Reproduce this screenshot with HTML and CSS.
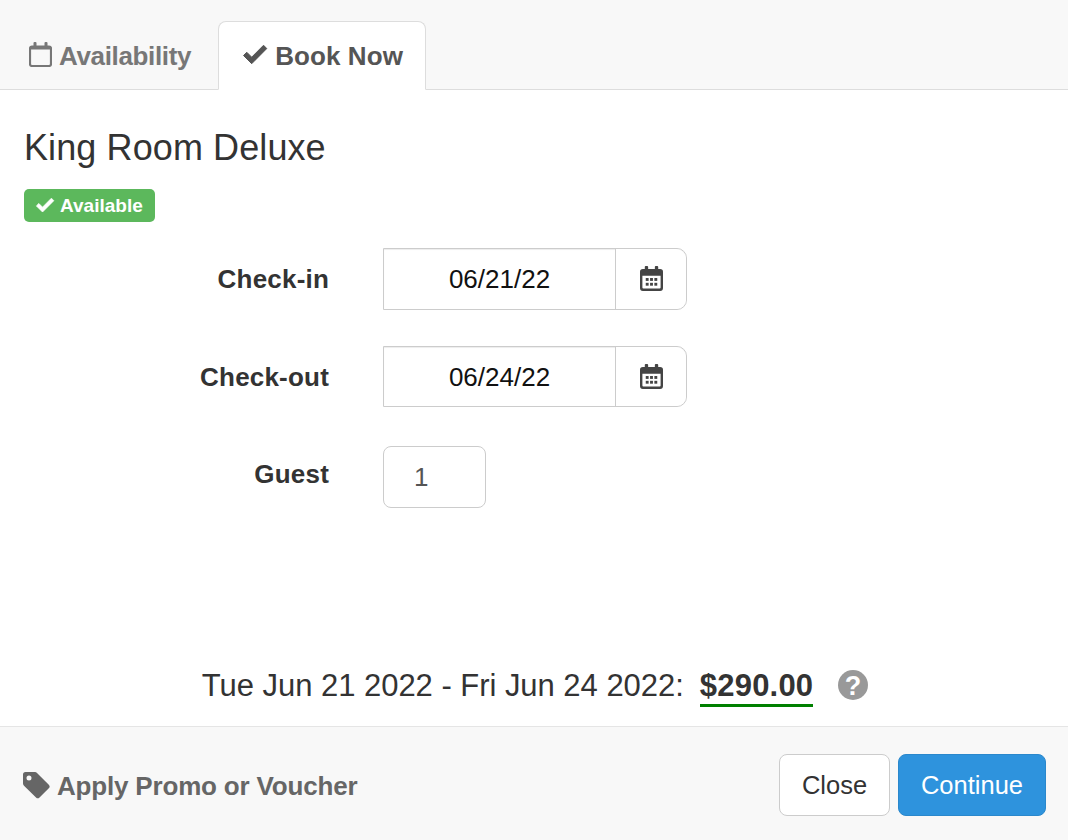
FILE: index.html
```html
<!DOCTYPE html>
<html lang="en">
<head>
<meta charset="utf-8">
<title>Book Now</title>
<link rel="stylesheet" href="styles.css">
</head>
<body>
<div class="modal">
  <div class="tabs">
    <a class="tab">
      <svg class="tab-icon cal-o" viewBox="0 0 23 25"><path d="M3 4.500h17a2 2 0 0 1 2 2v15.500a2 2 0 0 1-2 2H3a2 2 0 0 1-2-2V6.500a2 2 0 0 1 2-2z" fill="none" stroke="currentColor" stroke-width="2.200"/><path d="M1 4.500h21v3H1z" fill="currentColor"/><rect x="4.500" y="0" width="3" height="6" rx="1" fill="currentColor"/><rect x="15.500" y="0" width="3" height="6" rx="1" fill="currentColor"/></svg>
      <span class="tab-label-muted">Availability</span>
    </a>
    <a class="tab active">
      <svg class="tab-icon check" viewBox="0 0 26 20"><path d="M1.500 10.500 9.700 18.700 24.800 3.500 21.500 .3 9.700 12.200 4.800 7.300z" fill="currentColor" stroke="currentColor" stroke-width="1" stroke-linejoin="round"/></svg>
      <span class="tab-label-active">Book Now</span>
    </a>
  </div>
  <div class="content">
    <h1 class="title">King Room Deluxe</h1>
    <span class="badge">
      <svg class="badge-icon" viewBox="0 0 26 20"><path d="M1.500 10.500 9.700 18.700 24.800 3.500 21.500 .3 9.700 12.200 4.800 7.300z" fill="currentColor" stroke="currentColor" stroke-width="1" stroke-linejoin="round"/></svg>
      Available
    </span>
    <div class="form">
      <div class="row">
        <label class="label">Check-in</label>
        <div class="date-group">
          <div class="date-value">06/21/22</div>
          <div class="date-addon">
            <svg class="cal" viewBox="0 0 24 26"><path fill-rule="evenodd" d="M3 3h18a3 3 0 0 1 3 3v17a3 3 0 0 1-3 3H3a3 3 0 0 1-3-3V6a3 3 0 0 1 3-3zM2.500 10v12.500a1 1 0 0 0 1 1h17a1 1 0 0 0 1-1V10z" fill="currentColor"/><rect x="5" y="0" width="3.500" height="6" rx="1" fill="currentColor"/><rect x="15.500" y="0" width="3.500" height="6" rx="1" fill="currentColor"/><g fill="currentColor"><rect x="6" y="12.500" width="3" height="3"/><rect x="10.500" y="12.500" width="3" height="3"/><rect x="15" y="12.500" width="3" height="3"/><rect x="6" y="17.500" width="3" height="3"/><rect x="10.500" y="17.500" width="3" height="3"/><rect x="15" y="17.500" width="3" height="3"/></g></svg>
          </div>
        </div>
      </div>
      <div class="row">
        <label class="label">Check-out</label>
        <div class="date-group">
          <div class="date-value">06/24/22</div>
          <div class="date-addon">
            <svg class="cal" viewBox="0 0 24 26"><path fill-rule="evenodd" d="M3 3h18a3 3 0 0 1 3 3v17a3 3 0 0 1-3 3H3a3 3 0 0 1-3-3V6a3 3 0 0 1 3-3zM2.500 10v12.500a1 1 0 0 0 1 1h17a1 1 0 0 0 1-1V10z" fill="currentColor"/><rect x="5" y="0" width="3.500" height="6" rx="1" fill="currentColor"/><rect x="15.500" y="0" width="3.500" height="6" rx="1" fill="currentColor"/><g fill="currentColor"><rect x="6" y="12.500" width="3" height="3"/><rect x="10.500" y="12.500" width="3" height="3"/><rect x="15" y="12.500" width="3" height="3"/><rect x="6" y="17.500" width="3" height="3"/><rect x="10.500" y="17.500" width="3" height="3"/><rect x="15" y="17.500" width="3" height="3"/></g></svg>
          </div>
        </div>
      </div>
      <div class="row guest-row">
        <label class="label guest-label">Guest</label>
        <div class="guest">1</div>
      </div>
    </div>
    <div class="summary">
      <span class="dates">Tue Jun 21 2022 - Fri Jun 24 2022:</span>
      <span class="price">$290.00</span>
      <svg class="help" viewBox="0 0 30 30"><circle cx="15" cy="15" r="15" fill="currentColor"/><text class="help-mark" x="15" y="24.500" text-anchor="middle">?</text></svg>
    </div>
  </div>
  <div class="footer">
    <a class="promo">
      <svg class="tag" viewBox="0 0 27 27"><path fill-rule="evenodd" d="M2.500 0h9.500a3 3 0 0 1 2 .9l11.800 11.800a2.500 2.500 0 0 1 0 3.500l-9.300 9.300a2.500 2.500 0 0 1-3.500 0L1 13.700a3.500 3.500 0 0 1-1-2.200V2.500A2.500 2.500 0 0 1 2.500 0zM6 3.500a2.500 2.500 0 1 0 0 5 2.500 2.500 0 0 0 0-5z" fill="currentColor"/></svg>
      <span class="promo-label">Apply Promo or Voucher</span>
    </a>
    <div class="actions">
      <button class="btn">Close</button>
      <button class="btn primary">Continue</button>
    </div>
  </div>
</div>
</body>
</html>
```
FILE: styles.css
```css
* { box-sizing: border-box; }
html, body { margin: 0; padding: 0; }
body {
  font-family: "Liberation Sans", Arial, sans-serif;
  color: #333;
  background: #fff;
}
.modal {
  width: 1068px;
  height: 840px;
  display: flex;
  flex-direction: column;
}
.tabs {
  height: 90px;
  flex: none;
  background: #f8f8f8;
  border-bottom: 1px solid #ddd;
  display: flex;
  align-items: flex-end;
  padding-left: 4px;
  gap: 2px;
}
.tab {
  height: 69px;
  margin-bottom: -1px;
  padding: 2px 24px 0;
  display: flex;
  align-items: center;
  gap: 7px;
  font-size: 26px;
  font-weight: 700;
  color: #777;
  border: 1px solid transparent;
  border-radius: 8px 8px 0 0;
  white-space: nowrap;
}
.tab.active {
  padding: 2px 22px 0 23px;
  color: #555;
  background: #fff;
  border-color: #ddd;
  border-bottom-color: #fff;
}
.tab-label-muted { letter-spacing: -0.35px; }
.tab-label-active { letter-spacing: 0.1px; }
.tab-icon { display: block; flex: none; }
.cal-o { width: 23px; height: 25px; margin-top: -4px; }
.check { width: 26px; height: 20px; margin-top: -3px; }
.content {
  flex: 1;
  position: relative;
  padding: 0 24px;
  display: flex;
  flex-direction: column;
  align-items: flex-start;
}
.title {
  margin: 38px 0 0;
  font-size: 36px;
  line-height: 40px;
  letter-spacing: 0.1px;
  font-weight: 400;
  color: #333;
}
.badge {
  margin-top: 21px;
  height: 33px;
  padding: 0 12px 0 11px;
  display: flex;
  align-items: center;
  gap: 5px;
  background: #5cb85c;
  color: #fff;
  font-size: 19px;
  font-weight: 700;
  border-radius: 5px;
}
.badge-icon { width: 20px; height: 15px; display: block; }
.form {
  margin-top: 26px;
  display: flex;
  flex-direction: column;
}
.row {
  display: flex;
  align-items: flex-start;
  height: 61.5px;
  margin-bottom: 36px;
}
.guest-row { margin-top: 3px; }
.label {
  width: 305px;
  text-align: right;
  font-size: 26px;
  letter-spacing: 0.2px;
  font-weight: 700;
  line-height: 63px;
  margin-right: 54px;
  flex: none;
}
.guest-label { line-height: 56px; }
.date-group {
  width: 304px;
  height: 61.5px;
  display: flex;
  border: 1px solid #ccc;
  border-radius: 0 10px 10px 0;
  box-shadow: inset 0 1px 1px rgba(0,0,0,.075);
}
.date-value {
  flex: 1;
  text-align: center;
  font-size: 26px;
  line-height: 60px;
  color: #111;
}
.date-addon {
  width: 71px;
  border-left: 1px solid #ccc;
  display: flex;
  align-items: center;
  justify-content: center;
  background: #fff;
  border-radius: 0 10px 10px 0;
}
.cal { width: 23px; height: 25px; color: #444; display: block; }
.guest {
  width: 103px;
  height: 61.5px;
  border: 1px solid #ccc;
  border-radius: 8px;
  font-size: 26px;
  line-height: 60px;
  padding-left: 30px;
  color: #555;
}
.summary {
  position: absolute;
  left: 0;
  right: 0;
  top: 576px;
  padding-left: 2px;
  display: flex;
  align-items: center;
  justify-content: center;
  font-size: 31px;
  height: 40px;
}
.dates { color: #333; letter-spacing: -0.03px; }
.price {
  margin-left: 16px;
  font-weight: 700;
  letter-spacing: 0.2px;
  border-bottom: 3px solid green;
  line-height: 40px;
  height: 41px;
}
.help { width: 30px; height: 30px; margin-left: 25px; margin-top: -2px; color: #999; display: block; }
.help-mark { font-family: "Liberation Sans", Arial, sans-serif; font-size: 27px; font-weight: 700; fill: #fff; }
.footer {
  height: 114px;
  flex: none;
  background: #f8f8f8;
  border-top: 1px solid #e5e5e5;
  padding: 0 22px 0 23px;
  display: flex;
  align-items: center;
  justify-content: space-between;
}
.promo {
  display: flex;
  align-items: center;
  gap: 7px;
  font-size: 26px;
  font-weight: 700;
  color: #666;
  margin-top: 6px;
}
.promo-label { letter-spacing: -0.18px; }
.tag { width: 27px; height: 27px; display: block; margin-top: -3px; }
.actions { display: flex; gap: 8px; margin-top: 3px; }
.btn {
  height: 61.5px;
  width: 111px;
  padding: 0;
  font-family: inherit;
  font-size: 25.5px;
  color: #333;
  background: #fff;
  border: 1px solid #ccc;
  border-radius: 8px;
}
.btn.primary {
  width: 148px;
  color: #fff;
  background: #2e93dd;
  border-color: #2b88cc;
}
```
